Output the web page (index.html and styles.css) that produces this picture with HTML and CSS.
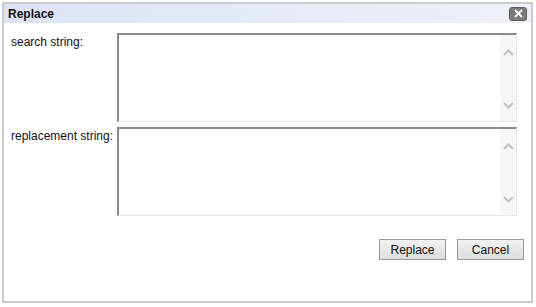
FILE: index.html
```html
<!DOCTYPE html>
<html lang="en">
<head>
  <meta charset="UTF-8">
  <title>Replace</title>
  <link rel="stylesheet" href="styles.css">
</head>
<body>
  <div class="dialog">
    <div class="titlebar">
      <span class="title">Replace</span>
      <button class="close" aria-label="Close">
        <svg width="9" height="9" viewBox="0 0 9 9"><path d="M1 1L8 8M8 1L1 8" stroke="#fff" stroke-width="1.8" fill="none"/></svg>
      </button>
    </div>
    <div class="form">
      <label class="label">search string:</label>
      <div class="field">
        <div class="field-text"></div>
        <div class="scroll">
          <svg width="11" height="7" viewBox="0 0 11 7"><path d="M1 6L5.5 1.5L10 6" stroke="#c2c2c2" stroke-width="2" fill="none"/></svg>
          <svg width="11" height="7" viewBox="0 0 11 7"><path d="M1 1L5.5 5.5L10 1" stroke="#c2c2c2" stroke-width="2" fill="none"/></svg>
        </div>
      </div>
      <label class="label">replacement string:</label>
      <div class="field">
        <div class="field-text"></div>
        <div class="scroll">
          <svg width="11" height="7" viewBox="0 0 11 7"><path d="M1 6L5.5 1.5L10 6" stroke="#c2c2c2" stroke-width="2" fill="none"/></svg>
          <svg width="11" height="7" viewBox="0 0 11 7"><path d="M1 1L5.5 5.5L10 1" stroke="#c2c2c2" stroke-width="2" fill="none"/></svg>
        </div>
      </div>
    </div>
    <div class="actions">
      <button class="btn">Replace</button>
      <button class="btn">Cancel</button>
    </div>
  </div>
</body>
</html>
```

FILE: styles.css
```css
html {
  box-sizing: border-box;
}
*, *:before, *:after {
  box-sizing: inherit;
}
body {
  margin: 0;
  padding: 2px;
  background: #fff;
  font-family: "Liberation Sans", Arial, sans-serif;
  font-size: 12px;
  color: #111;
}

.dialog {
  width: 531px;
  height: 301px;
  border: 2px solid #cbcbcb;
  background: #fff;
}

.titlebar {
  height: 19px;
  display: flex;
  align-items: center;
  justify-content: space-between;
  padding: 0 4px 0 4px;
  background: linear-gradient(to right, #dce3f4, #eef1f9);
}

.title {
  font-weight: bold;
  color: #111;
}

.close {
  width: 18px;
  height: 14px;
  padding: 0;
  border: 1px solid #5f5f5f;
  border-radius: 3px;
  background: #7b7b7b;
  display: flex;
  align-items: center;
  justify-content: center;
}

.form {
  display: grid;
  grid-template-columns: 106px 400px;
  row-gap: 5px;
  padding: 10px 0 0 7px;
}

.label {
  padding-top: 2px;
  line-height: 14px;
}

.field {
  height: 89px;
  display: flex;
  border: 1px solid #e6e6e6;
  border-top: 2px solid #8a8a8a;
  border-left: 2px solid #8a8a8a;
  background: #fff;
}

.field-text {
  flex: 1;
}

.scroll {
  width: 16px;
  display: flex;
  flex-direction: column;
  justify-content: space-between;
  align-items: center;
  padding: 14px 0 12px;
  background: #f6f6f6;
}

.actions {
  display: flex;
  justify-content: flex-end;
  gap: 11px;
  padding: 23px 7px 0 0;
}

.btn {
  width: 67px;
  height: 21px;
  padding: 0;
  border: 1px solid #9a9a9a;
  background: linear-gradient(#f2f2f2, #dcdcdc);
  font-family: "Liberation Sans", Arial, sans-serif;
  font-size: 12px;
  color: #111;
}
```
